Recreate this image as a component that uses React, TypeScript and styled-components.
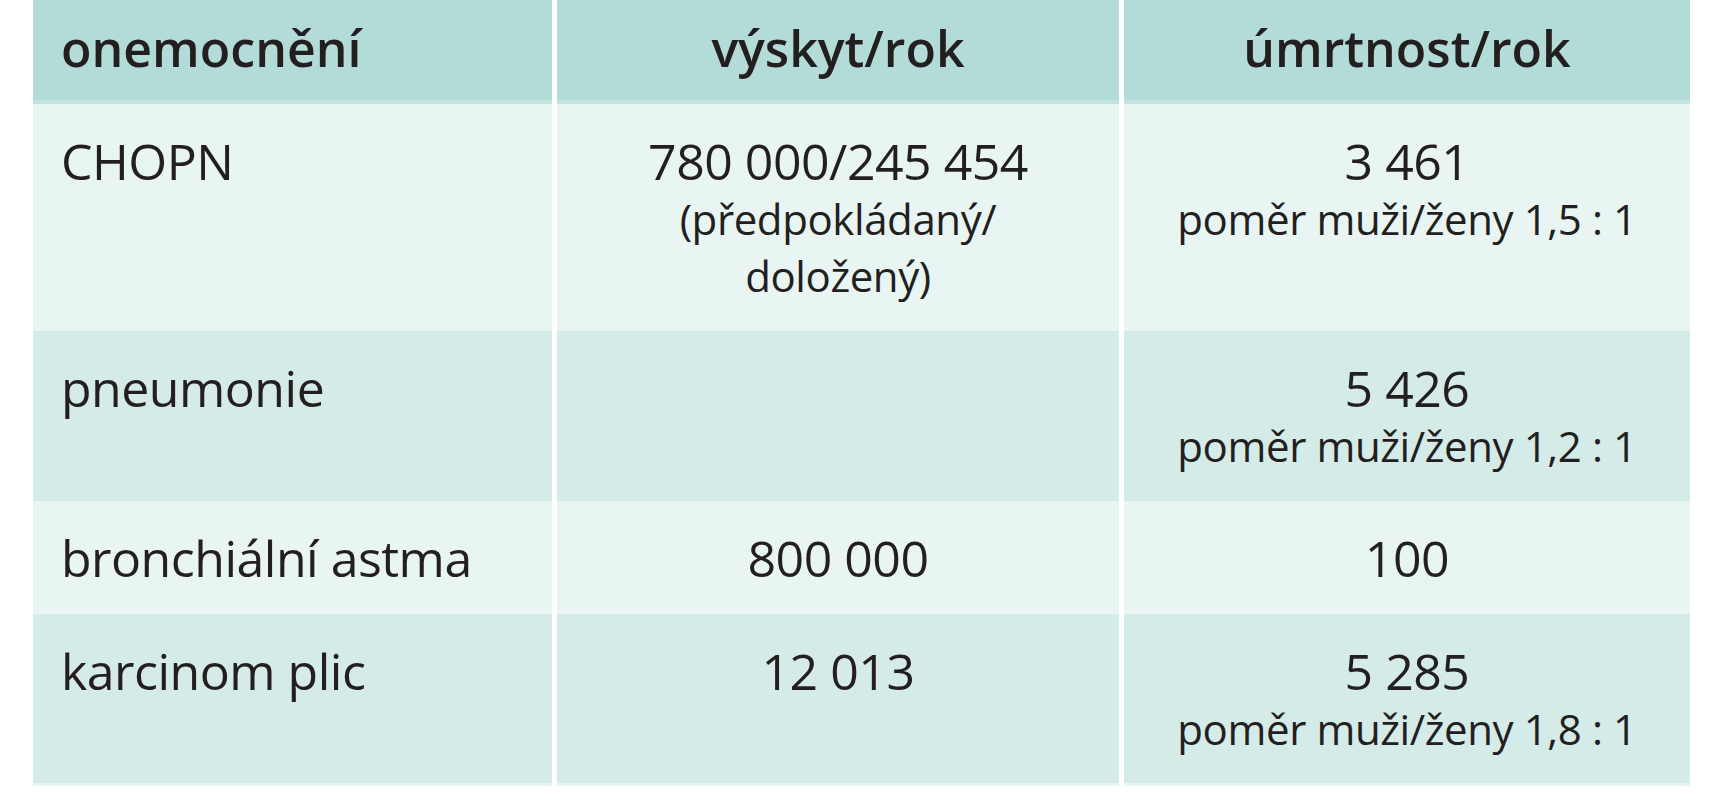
import React from "react";
import styled, { createGlobalStyle } from "styled-components";

const Global = createGlobalStyle`
  html, body {
    margin: 0;
    padding: 0;
    background: #ffffff;
  }
  body {
    font-family: "Open Sans", "Noto Sans", "Liberation Sans", sans-serif;
    color: #231f20;
  }
`;

const Table = styled.div`
  display: grid;
  grid-template-columns: 519px 562px 566px;
  column-gap: 5px;
  margin-left: 33px;
  width: 1657px;
`;

const HeadCell = styled.div<{ $align?: "left" | "center" }>`
  background: #b3dcd8;
  border-bottom: 4px solid #c2e3df;
  box-sizing: border-box;
  height: 104px;
  padding-top: 19px;
  padding-left: ${(p) => (p.$align === "left" ? "28px" : "0")};
  text-align: ${(p) => p.$align ?? "center"};
  font-size: 50px;
  line-height: 58px;
  font-weight: 600;
  letter-spacing: 0;
`;

const Cell = styled.div<{ $dark?: boolean; $align?: "left" | "center"; $last?: boolean }>`
  background: ${(p) => (p.$dark ? "#d5ebe8" : "#e8f5f3")};
  padding: 28px 0 ${(p) => (p.$last ? "26px" : "27px")};
  padding-left: ${(p) => (p.$align === "left" ? "28px" : "0")};
  text-align: ${(p) => p.$align ?? "center"};
  border-bottom: ${(p) => (p.$last ? "3px solid #e9f5f3" : "0")};
`;

const Main = styled.div`
  font-size: 50px;
  line-height: 58px;
  letter-spacing: -0.5px;
`;

const Sub = styled.div`
  font-size: 42px;
  line-height: 57px;
  letter-spacing: -0.4px;
`;

type Row = {
  name: string;
  inc?: string;
  incSub?: string[];
  mort: string;
  ratio?: string;
};

const rows: Row[] = [
  {
    name: "CHOPN",
    inc: "780 000/245 454",
    incSub: ["(předpokládaný/", "doložený)"],
    mort: "3 461",
    ratio: "poměr muži/ženy 1,5 : 1",
  },
  { name: "pneumonie", mort: "5 426", ratio: "poměr muži/ženy 1,2 : 1" },
  { name: "bronchiální astma", inc: "800 000", mort: "100" },
  { name: "karcinom plic", inc: "12 013", mort: "5 285", ratio: "poměr muži/ženy 1,8 : 1" },
];

export default function App() {
  return (
    <>
      <Global />
      <Table>
        <HeadCell $align="left">onemocnění</HeadCell>
        <HeadCell>výskyt/rok</HeadCell>
        <HeadCell>úmrtnost/rok</HeadCell>
        {rows.map((r, i) => {
          const dark = i % 2 === 1;
          const last = i === rows.length - 1;
          return (
            <React.Fragment key={r.name}>
              <Cell $dark={dark} $align="left" $last={last}>
                <Main>{r.name}</Main>
              </Cell>
              <Cell $dark={dark} $last={last}>
                {r.inc && <Main>{r.inc}</Main>}
                {r.incSub?.map((s) => (
                  <Sub key={s}>{s}</Sub>
                ))}
              </Cell>
              <Cell $dark={dark} $last={last}>
                <Main>{r.mort}</Main>
                {r.ratio && <Sub>{r.ratio}</Sub>}
              </Cell>
            </React.Fragment>
          );
        })}
      </Table>
    </>
  );
}
